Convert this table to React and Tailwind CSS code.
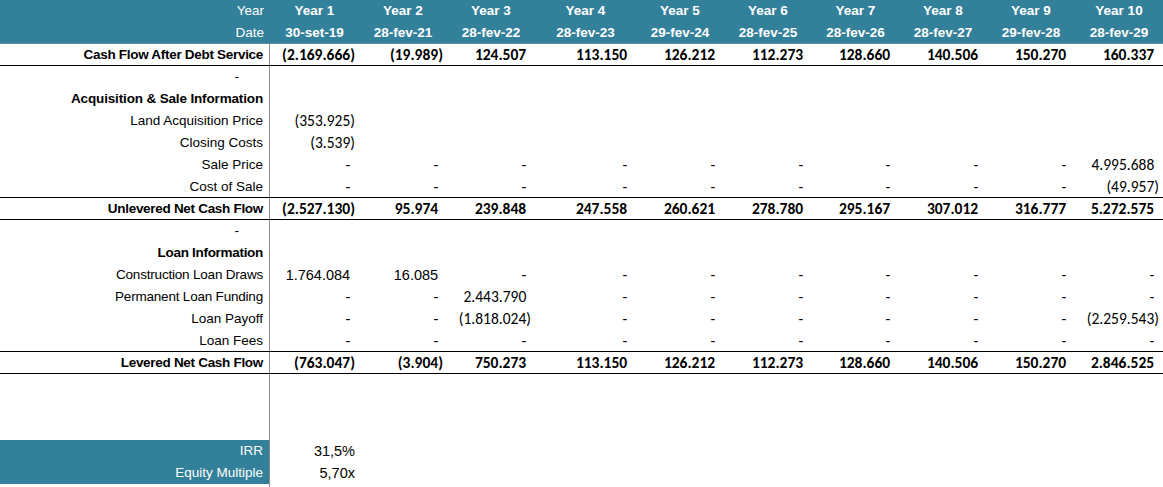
import React from "react";

const W = [
  "w-[89px]",
  "w-[88px]",
  "w-[88px]",
  "w-[101px]",
  "w-[88px]",
  "w-[88px]",
  "w-[87px]",
  "w-[88px]",
  "w-[88px]",
  "w-[88px]",
];

const years = ["Year 1","Year 2","Year 3","Year 4","Year 5","Year 6","Year 7","Year 8","Year 9","Year 10"];
const dates = ["30-set-19","28-fev-21","28-fev-22","28-fev-23","29-fev-24","28-fev-25","28-fev-26","28-fev-27","29-fev-28","28-fev-29"];

const D = "-";
const rows = [
  { label: "Cash Flow After Debt Service", bold: true, line: true, vals: ["(2.169.666)","(19.989)","124.507","113.150","126.212","112.273","128.660","140.506","150.270","160.337"] },
  { label: "-", dash: true, vals: [] },
  { label: "Acquisition & Sale Information", bold: true, wide: true, vals: [] },
  { label: "Land Acquisition Price", vals: ["(353.925)"] },
  { label: "Closing Costs", vals: ["(3.539)"] },
  { label: "Sale Price", vals: [D,D,D,D,D,D,D,D,D,"4.995.688"] },
  { label: "Cost of Sale", line: true, vals: [D,D,D,D,D,D,D,D,D,"(49.957)"] },
  { label: "Unlevered Net Cash Flow", bold: true, line: true, vals: ["(2.527.130)","95.974","239.848","247.558","260.621","278.780","295.167","307.012","316.777","5.272.575"] },
  { label: "-", dash: true, vals: [] },
  { label: "Loan Information", bold: true, vals: [] },
  { label: "Construction Loan Draws", narrow: true, arialFirst: 2, vals: ["1.764.084","16.085",D,D,D,D,D,D,D,D] },
  { label: "Permanent Loan Funding", narrow: true, vals: [D,D,"2.443.790",D,D,D,D,D,D,D] },
  { label: "Loan Payoff", vals: [D,D,"(1.818.024)",D,D,D,D,D,D,"(2.259.543)"] },
  { label: "Loan Fees", line: true, vals: [D,D,D,D,D,D,D,D,D,D] },
  { label: "Levered Net Cash Flow", bold: true, line: true, vals: ["(763.047)","(3.904)","750.273","113.150","126.212","112.273","128.660","140.506","150.270","2.846.525"] },
  { label: "", vals: [] },
  { label: "", vals: [] },
  { label: "", vals: [] },
];

function NumCell({ v, w, bold, arialFont }) {
  const neg = v && v.startsWith("(");
  return (
    <div
      className={`${w} h-full flex items-center justify-end pr-[4px] leading-none text-black ${bold ? "font-bold" : ""} ${arialFont ? "font-['Liberation_Sans',Arial,sans-serif] text-[14.5px]" : "font-['Carlito','Lato',sans-serif] text-[15.5px]"}`}
    >
      {v ? (
        <span className="whitespace-pre">
          {v}
          {!neg && <span className="invisible">)</span>}
        </span>
      ) : null}
    </div>
  );
}

function labelTracking(r) {
  if (r.bold && r.wide) return "font-bold tracking-[-0.15px]";
  if (r.bold) return "font-bold tracking-[-0.3px]";
  if (r.narrow) return "tracking-[-0.2px]";
  return "";
}

export default function App() {
  return (
    <div className="w-[1163px] h-[487px] bg-white overflow-hidden font-['Liberation_Sans',Arial,sans-serif] text-[13.5px]">
      {/* header */}
      <div className="bg-[#33809a] text-white border-b border-[#5f8794]">
        <div className="flex h-[22px] items-center pt-px">
          <div className="w-[270px] text-right pr-[6px]">Year</div>
          {years.map((y, i) => (
            <div key={y} className={`${W[i]} text-center font-bold`}>{y}</div>
          ))}
        </div>
        <div className="flex h-[21px] items-center pt-px">
          <div className="w-[270px] text-right pr-[6px]">Date</div>
          {dates.map((d, i) => (
            <div key={d} className={`${W[i]} text-center font-bold`}>{d}</div>
          ))}
        </div>
      </div>

      {rows.map((r, ri) => (
        <div
          key={ri}
          className={`flex h-[22px] ${r.line ? "border-b border-black" : ""}`}
        >
          <div
            className={`w-[269px] h-full flex items-center justify-end pt-px text-black ${labelTracking(r)} ${r.dash ? "pr-[30px]" : "pr-[6px]"}`}
          >
            {r.label}
          </div>
          <div className="w-px h-full bg-[#8a8a8a]" />
          {W.map((w, i) => (
            <NumCell
              key={i}
              w={w}
              v={r.vals[i]}
              bold={r.bold}
              arialFont={r.arialFirst && i < r.arialFirst}
            />
          ))}
        </div>
      ))}

      {[
        ["IRR", "31,5%"],
        ["Equity Multiple", "5,70x"],
      ].map(([l, v]) => (
        <div key={l} className="flex h-[22px]">
          <div className="w-[269px] h-full flex items-center justify-end pr-[6px] pt-px bg-[#33809a] text-white">
            {l}
          </div>
          <div className="w-px h-full bg-[#8a8a8a]" />
          <div className="w-[89px] h-full flex items-center justify-end pr-[4px] pt-px text-black text-[14.5px]">
            {v}
          </div>
        </div>
      ))}
      <div className="flex h-[3px]">
        <div className="w-[269px]" />
        <div className="w-px h-full bg-[#8a8a8a]" />
      </div>
    </div>
  );
}
